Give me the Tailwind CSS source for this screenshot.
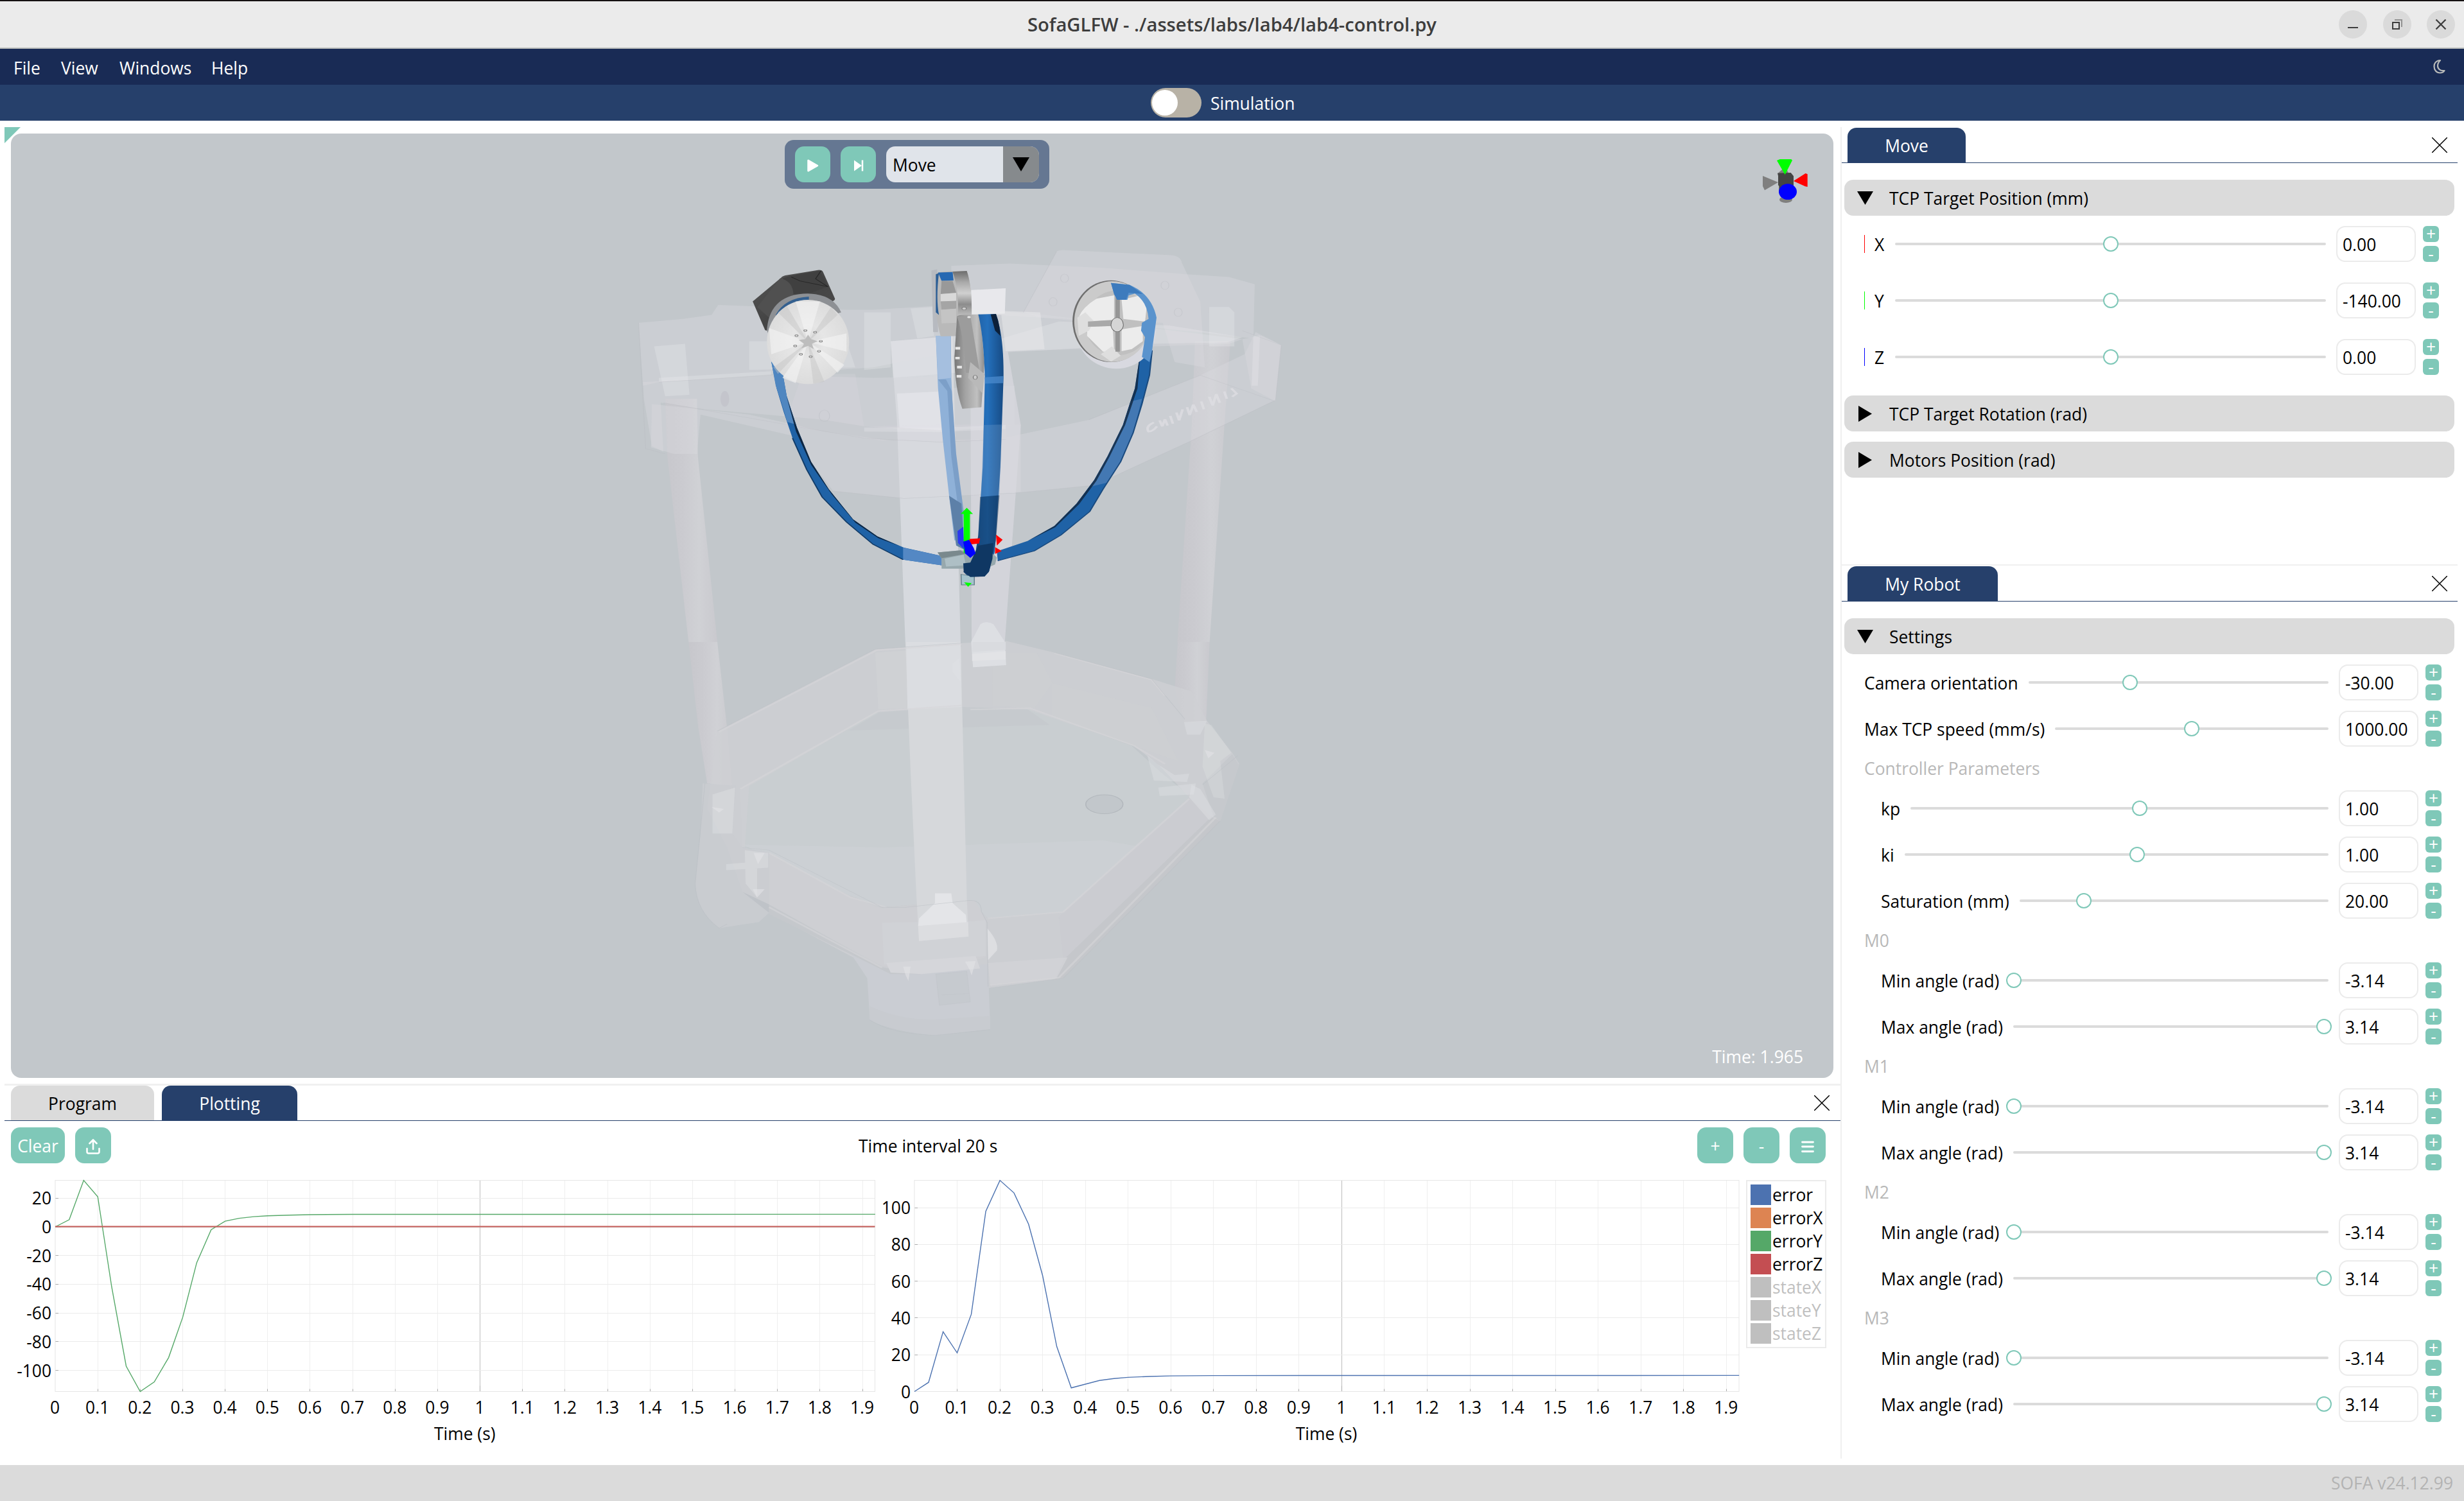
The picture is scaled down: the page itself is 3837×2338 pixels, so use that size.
<!DOCTYPE html>
<html lang="en">
<head>
<meta charset="utf-8">
<title>SofaGLFW</title>
<script src="https://cdn.jsdelivr.net/npm/@tailwindcss/browser@4"></script>
</head>
<body class="w-[3837px] h-[2338px] overflow-hidden bg-white font-['Open_Sans',sans-serif] text-[26.43px] leading-[36px] text-black flex flex-col">

<!-- window title bar -->
<header class="h-[76px] shrink-0 bg-[#ebebeb] border-t-2 border-t-[#151112] border-b-2 border-b-[#bcbfbd] flex items-center relative justify-end pr-[14px] gap-6">
  <div class="absolute inset-0 flex items-center justify-center text-[29.2px] font-semibold text-[#3d3d3d]">SofaGLFW - ./assets/labs/lab4/lab4-control.py</div>
  <svg class="size-11" viewBox="0 0 44 44"><circle cx="22" cy="22" r="22" fill="#dadada"/><path d="M14 27h16" stroke="#3d3d3d" stroke-width="2"/></svg>
  <svg class="size-11 ml-px" viewBox="0 0 44 44"><circle cx="22" cy="22" r="22" fill="#dadada"/><path d="M18 15h11v11" stroke="#929292" stroke-width="2" fill="none"/><path d="M15 19h10v10h-10z" stroke="#3d3d3d" stroke-width="2" fill="none"/></svg>
  <svg class="size-11" viewBox="0 0 44 44"><circle cx="22" cy="22" r="22" fill="#dadada"/><path d="M14.500 14.500l15 15m0-15l-15 15" stroke="#3d3d3d" stroke-width="2.300"/></svg>
</header>

<!-- menu bar -->
<nav class="h-[56px] shrink-0 bg-[#192b55] text-white flex items-center pl-[21px] pr-7">
  <span class="w-[74px] pt-[3px]">File</span><span class="w-[91px] pt-[3px]">View</span><span class="w-[143px] pt-[3px]">Windows</span><span class="pt-[3px]">Help</span>
  <svg class="ml-auto w-[20px] h-[24px]" viewBox="0 0 20 24"><path d="M11 2C4 2.500 1.500 7 1.500 11.500C1.500 17 5 21.500 10.500 21.500C14 21.500 16.500 20 17.500 18C11 19 7 15 7 10.500C7 6 9 4 11 2Z" fill="none" stroke="#b8bab9" stroke-width="2.200" stroke-linejoin="round"/></svg>
</nav>

<!-- simulation toggle -->
<div class="h-[56px] shrink-0 bg-[#26406b] text-white flex items-center pl-[1792px]">
  <div class="w-[79px] h-[46px] rounded-full bg-[#b8b2a6] flex items-center pl-[2px]"><div class="size-10 rounded-full bg-white"></div></div>
  <span class="ml-[14px] pt-[2px]">Simulation</span>
</div>

<div class="flex flex-1 min-h-0">
  <!-- left column -->
  <div class="w-[2866px] flex flex-col relative pt-5">
    <svg class="absolute left-[7px] top-[10px] w-[25px] h-[25px]" viewBox="0 0 25 25"><path d="M0 0h25L0 25z" fill="#7fc8b8"/></svg>
    <main class="relative ml-[17px] w-[2838px] h-[1471px] rounded-[16px] bg-[#c2c7cb] shrink-0 overflow-hidden">
      <!-- robot, upper body -->
      <svg class="absolute left-[943px] top-[152px] w-[1080px] h-[640px]" viewBox="0 0 1568 1568" preserveAspectRatio="none">
        <defs>
          <linearGradient id="pole" x1="0" x2="1" y1="0" y2="0"><stop offset="0" stop-color="#c7c7cc"/><stop offset=".35" stop-color="#cbcbd0"/><stop offset=".65" stop-color="#d0d1d5"/><stop offset="1" stop-color="#c9c9ce"/></linearGradient>
          <linearGradient id="tube" x1="0" x2="1" y1="0" y2="0"><stop offset="0" stop-color="#154070"/><stop offset=".3" stop-color="#1f60a4"/><stop offset=".6" stop-color="#2470bc"/><stop offset="1" stop-color="#174b84"/></linearGradient>
          <linearGradient id="metal" x1="0" x2="1" y1="0" y2="0"><stop offset="0" stop-color="#777"/><stop offset=".35" stop-color="#a2a2a2"/><stop offset=".75" stop-color="#c0c0c0"/><stop offset="1" stop-color="#8b8b8b"/></linearGradient>
          <linearGradient id="rim" x1="0" x2="0" y1="0" y2="1"><stop offset="0" stop-color="#6c6c6c"/><stop offset=".25" stop-color="#a9a9a9"/><stop offset=".5" stop-color="#d0d0d0"/><stop offset=".75" stop-color="#8c8c8c"/><stop offset="1" stop-color="#bdbdbd"/></linearGradient>
          <radialGradient id="disc"><stop offset="0" stop-color="#dadada"/><stop offset=".4" stop-color="#e6e6e6"/><stop offset="1" stop-color="#dcdcdc"/></radialGradient>
          <linearGradient id="dark" x1="0" x2="1" y1="0" y2="1"><stop offset="0" stop-color="#565656"/><stop offset=".5" stop-color="#444"/><stop offset="1" stop-color="#4d4d4d"/></linearGradient>
        </defs>
        <!-- poles -->
        <path d="M110 640L182 640L184 860L228 1568L163 1568L115 860Z" fill="url(#pole)"/>
        <path d="M1308 420L1388 420L1372 800L1341 1568L1268 1568L1300 760Z" fill="url(#pole)"/>
        <path d="M620 420L760 400L778 1568L653 1568L634 720Z" fill="#d6d9de"/>
        <path d="M800 460L885 460L914 740L878 1568L803 1568Z" fill="#d3d4da"/>
        <path d="M802 1568L823 1500Q835 1485 852 1500L878 1568Z" fill="#dfe1e5"/>
        <!-- translucent housing -->
        <g fill="#dad9df" fill-opacity=".4">
          <path d="M50 350L150 335L215 320L230 282L520 300L580 300L725 285L810 300L970 320L1415 412L1385 430L960 455L700 480L580 520L96 576L60 590Z"/>
          <path d="M757 132L890 124L1100 140L1290 165L1385 175L1443 203L1440 410L1320 385L960 330L757 310Z"/>
          <path d="M920 310L995 78Q1000 72 1010 72L1255 92Q1275 95 1278 120L1320 270L1330 520L1262 500L1235 350L960 330Z"/>
          <path d="M60 576L350 550L580 560L725 555L735 600L900 590L900 740L730 765L560 745L470 720L200 680L100 655L106 842L80 820L62 640Z"/>
          <path d="M80 660L300 700L470 765L620 800L860 795L1068 720L1320 550L1420 470L1445 385L1503 435L1490 645L1300 800L1080 970L900 1000L650 1020L490 992L395 780L190 700L182 850L130 850L78 825Z"/>
          <path d="M1415 412L1458 400L1503 435L1490 650L1435 600Z"/>
          <path d="M420 545L540 545L560 745L880 735L882 800L600 800L380 740Z" fill-opacity=".25"/>
          <path d="M866 740L914 738L914 995L866 1000Z"/>
          <path d="M634 620L732 612L735 760L640 750Z" fill="#f0f0f4"/>
        </g>
        <g fill="#ececf0" fill-opacity=".3">
          <path d="M85 440L155 430L165 625L110 630Z"/>
          <path d="M96 560L350 535L350 550L96 576Z"/>
          <path d="M665 295L715 290L718 400L680 410Z"/>
          <path d="M1000 345L1250 360L1415 405L1380 425L1200 430L960 455L870 460L870 410Z"/>
          <path d="M560 750L730 750L880 740L880 755L730 767L560 765Z"/>
          <path d="M1440 400L1455 398L1450 590L1436 590Z"/>
          <path d="M560 310L620 310L620 520L560 530ZM300 420L520 420L540 520L300 530ZM620 420L770 400L770 540L625 560Z"/>
          <path d="M1340 290L1385 290L1397 310L1397 440L1340 440Z"/>
        </g>
        <path d="M802 225L880 218L878 315L802 318Z" fill="#f4f4f6" fill-opacity=".7"/>
        <path d="M802 300L958 310L968 450L880 458L870 320L802 318Z" fill="#e9e9ec" fill-opacity=".5"/>
        <g fill="none" stroke="#bcbdc4" stroke-opacity=".5" stroke-width="1.500">
          <path d="M50 350L66 830L110 850M106 655L390 740L560 790L730 805L880 795M96 576L350 550M490 992L650 1020L900 1000L1080 970L1300 800L1490 645L1503 435L1415 380M1068 720L1320 550L1490 650M995 78L920 310"/>
          <ellipse cx="1013" cy="180" rx="9" ry="16"/><ellipse cx="1240" cy="207" rx="9" ry="16"/><ellipse cx="987" cy="270" rx="9" ry="16"/><ellipse cx="1270" cy="310" rx="9" ry="16"/><ellipse cx="470" cy="705" rx="12" ry="22"/>
        </g>
        <ellipse cx="245" cy="640" rx="10" ry="30" fill="#b9bac2" fill-opacity=".4"/>
        <!-- embossed maker's mark on the housing -->
        <g fill="none" stroke="#e0e0e4" stroke-opacity=".7" stroke-width="6"><path d="M1215 730Q1195 745 1203 765Q1212 765 1222 745M1228 722L1234 745L1240 718L1246 742M1252 705L1258 735M1266 692L1272 722L1280 680M1290 672L1296 702L1304 662L1312 690M1322 650L1328 680M1340 632L1348 665L1356 622L1364 655M1374 612L1380 640M1390 600L1402 620L1392 632"/></g>
        <!-- back tube -->
        <path d="M722 400L756 400L757 560L765 850L782 1070L785 1180L764 1180L752 1010L738 800L727 600Z" fill="#8fb1d8"/>
        <path d="M722 400L755 400L757 560L727 566Z" fill="#a5bfdf"/>
        <path d="M727 566L745 566L758 610L768 850L785 1070L783 1180L776 1100L757 860L748 610Z" fill="#7c9fc8"/>
        <path d="M752 1010L780 1040L786 1215L768 1200Z" fill="#5d80a8"/>
        <!-- left side tube -->
        <path d="M350 498L376 545L385 630L408 750L440 880L480 985L535 1100L590 1165L650 1208L735 1240L735 1275L648 1254L580 1195L520 1110L465 1015L430 910L398 790L378 690L362 600Z" fill="#1f62a6"/>
        <path d="M350 498L376 545L385 630L406 738L386 728L372 650L360 590Z" fill="#4f86c0"/>
        <path d="M648 1208L735 1240L735 1275L648 1254Z" fill="#5488c4"/>
        <path d="M384 628L408 750L440 880L480 985L535 1100L590 1165L640 1202L592 1172L540 1112L487 1005L440 892L406 765Z" fill="#0b1c30" fill-opacity=".85"/>
        <path d="M398 790L430 910L465 1015L520 1110L580 1195L648 1254" fill="none" stroke="#123c68" stroke-width="3"/>
        <!-- right side tube -->
        <path d="M1185 455L1211 455L1205 550L1188 660L1168 770L1140 880L1100 985L1070 1070L1005 1160L945 1220L862 1258L860 1222L930 1182L990 1125L1040 1040L1080 950L1110 860L1145 740L1172 600Z" fill="#1f62a6"/>
        <path d="M1188 640L1168 770L1140 880L1110 960L1072 975L1110 860L1145 740L1162 650Z" fill="#4378b3"/>
        <path d="M1185 455L1172 600L1162 650L1145 740L1110 860L1080 950L1040 1040L990 1125L930 1182L992 1130L1046 1042L1085 953L1115 860L1150 740L1168 650L1178 600Z" fill="#10253d" fill-opacity=".8"/>
        <path d="M1211 455L1205 550L1188 660L1168 770L1140 880L1100 985L1070 1070L1005 1160L945 1220L862 1258" fill="none" stroke="#1a4a7e" stroke-width="3"/>
        <!-- left motor and pulley -->
        <path d="M308 268L372 178Q376 170 386 168L458 148Q465 148 467 156L494 258Q494 265 488 268L484 278L340 380L336 378Z" fill="url(#dark)"/>
        <path d="M376 180L390 172L460 152L478 212L440 235L400 240Z" fill="#404040"/>
        <path d="M370 180Q398 190 400 240L345 330L318 290Z" fill="#505050"/>
        <path d="M395 175L415 190L478 212L450 182L462 152" fill="none" stroke="#262626" stroke-width="2"/>
        <path d="M340 380Q345 240 432 238Q490 240 508 310L345 400Z" fill="#8d9094"/>
        <path d="M360 320Q380 255 435 250L435 262Q385 265 362 325Z" fill="#34608f"/>
        <ellipse cx="433" cy="423" rx="93" ry="161" fill="url(#disc)"/>
        <g fill="#f6f6f6" fill-opacity=".55"><path d="M433 423L405 268L460 268ZM433 423L345 370L350 470ZM433 423L520 390L520 460ZM433 423L375 560L405 580ZM433 423L500 540L515 510Z"/></g>
        <g fill="#c4c4c4" fill-opacity=".45"><path d="M433 423L365 310L385 285ZM433 423L485 290L500 320ZM433 423L355 520L365 545ZM433 423L445 582L470 575Z"/></g>
        <g fill="#d8d8d8" stroke="#777" stroke-width="1.500"><circle cx="427" cy="379" r="3.500"/><circle cx="449" cy="386" r="3.500"/><circle cx="462" cy="420" r="3.500"/><circle cx="458" cy="458" r="3.500"/><circle cx="439" cy="479" r="3.500"/><circle cx="417" cy="470" r="3.500"/><circle cx="404" cy="438" r="3.500"/><circle cx="407" cy="399" r="3.500"/></g>
        <path d="M433 395L440 412L455 420L442 430L446 450L433 438L418 448L424 430L412 415L427 412Z" fill="#bdbdbd"/>
        <!-- rear pulley -->
        <path d="M712 150L725 146L727 385L716 385Z" fill="#b7bac0"/>
        <path d="M722 160Q740 150 792 152Q803 200 803 318L770 330L768 400L733 402Q716 300 722 160Z" fill="#b9b9b9"/>
        <path d="M760 155L792 152Q804 210 803 318L772 322Q775 230 760 155Z" fill="url(#rim)"/>
        <path d="M727 158L760 156L762 188L735 190Z" fill="#2568b2"/>
        <path d="M722 165L729 160Q722 260 729 320L722 310Z" fill="#2d5f96"/>
        <path d="M735 190L760 190L768 235L733 240Z" fill="#999"/><path d="M733 240L768 236L768 268L733 268Z" fill="#d9d9d9"/><path d="M733 268L768 266L768 296L735 300Z" fill="#a5a5a5"/><path d="M733 300L768 296L768 350L735 352Z" fill="#c4c4c4"/>
        <circle cx="786" cy="295" r="5" fill="#ccc" stroke="#777" stroke-width="1.500"/>
        <!-- center pulley -->
        <path d="M770 325Q775 318 822 318L832 500L825 672L782 678Q765 600 764 480Z" fill="url(#metal)"/>
        <path d="M770 325L800 322L822 545L790 540Q785 400 770 325Z" fill="#9c9c9c"/>
        <path d="M800 500L832 545L828 620L795 560Z" fill="#b9b9b9"/>
        <g fill="#e8e8e8"><rect x="766" y="442" width="11" height="10"/><rect x="766" y="480" width="10" height="9"/><rect x="770" y="514" width="11" height="10"/><rect x="769" y="549" width="11" height="10"/><circle cx="797" cy="328" r="4"/></g>
        <ellipse cx="811" cy="558" rx="4.500" ry="8" fill="#ccc" stroke="#666" stroke-width="1.500"/>
        <!-- right pulley -->
        <ellipse cx="1130" cy="380" rx="90" ry="145" fill="#d8d9e0"/>
        <ellipse cx="1118" cy="344" rx="87" ry="156" fill="#6f6f6f"/>
        <ellipse cx="1121" cy="345" rx="86" ry="154" fill="#cbcbcb"/>
        <ellipse cx="1133" cy="350" rx="74" ry="124" fill="#c0c0c0"/>
        <path d="M1085 258L1125 245L1125 338L1064 345L1046 325Q1055 290 1085 258ZM1142 262L1185 245L1200 270L1195 345L1146 335ZM1064 365L1122 362L1125 462L1100 460L1064 400ZM1142 375L1190 362L1190 420L1165 450L1142 458Z" fill="#ececec"/>
        <path d="M1042 330L1060 310L1080 345L1068 380L1045 400ZM1095 470L1120 440L1140 475L1118 498Z" fill="#dedede"/>
        <path d="M1128 250L1138 255L1138 460L1128 460Z" fill="#969696"/>
        <path d="M1066 345L1122 340L1122 362L1066 365Z" fill="#a9a9a9"/>
        <ellipse cx="1132" cy="357" rx="14" ry="27" fill="#d5d5d5" stroke="#666" stroke-width="1.500"/>
        <path d="M1118 198L1160 205Q1210 240 1221 330L1211 455L1205 500L1188 480L1195 405L1186 380L1188 350L1203 335Q1200 270 1172 238L1158 245L1155 262L1132 262L1125 240Z" fill="#5a93cd"/>
        <path d="M1118 198L1160 205L1190 240L1158 235L1152 262L1132 262L1125 240Z" fill="#3d7bbd"/>
        <!-- front tube -->
        <path d="M818 318L858 316Q876 400 875 560L868 900L858 1160L855 1225L842 1300L832 1318L795 1318L784 1300L806 1290L818 1160L828 900L833 560Q830 400 818 318Z" fill="url(#tube)"/>
        <path d="M830 740L872 738L866 1008L824 1014Z" fill="#6b97c8" fill-opacity=".35"/>
        <path d="M832 558L875 553L874 580L833 582Z" fill="#4d8dd0" fill-opacity=".7"/>
        <path d="M822 1014L866 1008L858 1180L842 1300L832 1318L795 1318L806 1290L818 1160Z" fill="#0d2f54" fill-opacity=".5"/>
        <path d="M846 318L858 316Q866 350 868 400L856 380Z" fill="#0c2039"/>
        <!-- effector and gizmo -->
        <path d="M726 1226L778 1218L850 1230L860 1245L856 1272L845 1280L780 1288L735 1288L735 1250Z" fill="#97a8ad"/>
        <path d="M742 1250L785 1235L790 1275L745 1280Z" fill="#aebfc5"/>
        <path d="M726 1226L778 1218L790 1232L735 1248Z" fill="#7a898d"/>
        <path d="M779 1310L809 1318L809 1350L780 1350Z" fill="#a5c3cd" stroke="#5d7a84" stroke-width="2"/>
        <path d="M784 1268L800 1265L818 1200L852 1190L850 1250L842 1300L832 1318L800 1320L785 1300Z" fill="#0f3763"/>
        <path d="M771 1145L784 1128L786 1215L772 1190Z" fill="#2a38f0"/>
        <path d="M785 1075L799 1075L799 1228L785 1228ZM778 1079L792 1056L806 1079ZM786 1340L803 1343L795 1357Z" fill="#0f0"/>
        <path d="M798 1175L822 1172L820 1192L798 1196ZM858 1158L873 1178L860 1200ZM856 1206L871 1221L856 1232Z" fill="#f00"/>
        <path d="M784 1185L797 1178L808 1210L812 1230L800 1247L788 1230Z" fill="#00f"/>
      </svg>
      <!-- robot, base -->
      <svg class="absolute left-[943px] top-[752px] w-[1080px] h-[680px]" viewBox="0 0 1568 1568" preserveAspectRatio="none">
        <path d="M163 92L228 92L250 400L262 610L205 600L185 400Z" fill="url(#pole)"/>
        <path d="M1269 92L1341 92L1333 380L1284 380L1262 260Z" fill="url(#pole)"/>
        <path d="M585 345L780 325L940 335L1165 465L1230 560L1300 650L1010 1062L840 1085L800 1020L600 1045L530 1005L285 830L280 620Z" fill="#c9ced1"/>
        <path d="M285 820L600 830L1100 805L1195 830L1010 1062L840 1085L800 1020L600 1045L530 1005Z" fill="#cdd1d4" fill-opacity=".8"/>
        <path d="M525 410L980 390L930 335L780 325L595 345Z" fill="#c6cace"/>
        <path d="M228 412L585 118L780 96L880 88L990 130L1210 225L1300 270L1335 375L1392 490L1408 530L1365 735L1010 1300L845 1335L600 1280L345 1065L285 990L250 830L205 690ZM300 610L290 830L530 1005L600 1045L800 1020L840 1085L1010 1062L1295 650L1230 540L1170 465L930 335L780 325L590 345Z" fill="#cecfd3" fill-rule="evenodd" fill-opacity=".8"/>
        <path d="M585 130L780 110L780 320L592 335Z" fill="#d0d3d6" fill-opacity=".6"/>
        <path d="M985 240L1210 330L1270 520L1170 465L985 360ZM850 130L950 130L985 240L945 330L850 320Z" fill="#cdcfd2" fill-opacity=".8"/>
        <path d="M195 600L270 608L262 780L285 830L345 850L345 1065L322 1098L232 1120Q180 1060 178 960L190 780Z" fill="#cacdd1" fill-opacity=".85"/>
        <path d="M1325 600L1392 495L1408 535L1365 735L1350 720Z" fill="#c6c9cd"/>
        <path d="M1295 650L1345 720L1010 1235L1000 1080Z" fill="#cbccd1"/>
        <path d="M1345 720L1365 735L1010 1300L990 1308L1010 1235Z" fill="#c5c7cb"/>
        <path d="M525 1200L610 1270L840 1250L845 1482L720 1505Q620 1490 573 1450L567 1300Z" fill="#cacdd3"/>
        <path d="M573 1400Q640 1450 720 1448L845 1435L845 1482L720 1505Q620 1490 573 1450Z" fill="#c8cbd0"/>
        <path d="M345 850L530 1010L600 1050L810 1020L835 1090L835 1225L690 1280L600 1255L345 1035Z" fill="#cecfd3"/>
        <path d="M600 1100L810 1095L835 1090L835 1220L605 1250Z" fill="#d2d3d8" fill-opacity=".6"/>
        <path d="M345 1035L600 1260L690 1285L620 1285L525 1210L345 1070Z" fill="#c5c8cc"/>
        <path d="M345 1035L285 990L345 1065Z" fill="#bfc3c8"/>
        <!-- front column -->
        <path d="M653 92L778 92L792 1010L796 1150L684 1166L678 1000L665 560Z" fill="#d6d8db"/>
        <path d="M655 92L778 92L780 325L658 335Z" fill="#dbdde1"/>
        <path d="M720 995L757 995L760 1030L790 1072L792 1105L682 1112L684 1085L720 1030Z" fill="#e4e5e8"/>
        <path d="M682 1112L795 1098L796 1150L684 1166Z" fill="#dcdde0"/>
        <path d="M610 1245L812 1220L822 1265L690 1285L620 1280Z" fill="#d5d6da"/>
        <path d="M722 1285L792 1275L800 1385L730 1397Z" fill="#c6cacf" stroke="#c0c4c9"/>
        <path d="M735 1360L796 1355" stroke="#c0c4c9"/>
        <path d="M802 92L823 30Q838 14 852 30L878 92L881 175L806 183Z" fill="#dddfe3"/>
        <path d="M805 92L880 92L880 120L804 128Z" fill="#d9dbdf"/><path d="M804 135L880 125L880 155L804 160Z" fill="#e2e3e6"/>
        <path d="M840 1245L1020 1225L995 1300L845 1325Z" fill="#d2d3d7" fill-opacity=".8"/>
        <path d="M838 1120Q865 1170 860 1200L840 1235Z" fill="#dddee1"/>
        <g fill="#e2e3e6" fill-opacity=".6">
          <path d="M217 640L268 615L262 780L217 780ZM290 840L343 850L343 900L318 895L318 1010L292 960ZM248 890L343 878L343 903L248 912ZM760 170L775 150L778 235L760 200ZM1283 380L1335 375L1320 425L1290 425ZM1200 500L1222 530L1262 570L1295 565L1290 595L1215 590ZM1225 615L1310 600L1305 640L1228 645Z" fill-opacity=".4"/>
          <path d="M648 1258L665 1258L660 1310L654 1290ZM788 1240L812 1238L803 1290L798 1268ZM310 850L335 850L320 890ZM308 980L335 980L318 1010ZM1330 480L1352 490L1338 510ZM215 685L243 692L232 705Z"/>
          <path d="M1330 385L1345 390L1390 490L1365 520L1375 655L1350 650L1325 540Z" fill-opacity=".3"/>
          <path d="M1300 605L1320 620L1355 712L1340 732L1295 650Z" fill-opacity=".4"/>
        </g>
        <g fill="none" stroke="#d6d6d9" stroke-width="5" stroke-opacity=".6">
          <path d="M232 415L588 122L780 100M990 132L1210 228L1240 285M280 620L592 340L780 320M800 335L935 330L1170 465L1240 530M345 850L530 1010L610 1045M840 1085L1010 1062L1295 655M600 1262L345 1045M1355 722L1000 1298L845 1325"/>
        </g>
        <g fill="none" stroke="#bbbfc4" stroke-width="1.500" stroke-opacity=".6">
          <path d="M228 412L585 118L780 96M990 130L1210 225L1285 370M600 1045L650 1046L800 1020Q825 1020 825 1060L838 1100L840 1330M1325 605L1405 500M250 1105L232 1120Q180 1060 178 960L200 600M1365 735L1010 1300L845 1335M573 1450Q620 1500 720 1505L845 1485M285 830L345 840L600 1045"/>
        </g>
        <ellipse cx="1103" cy="675" rx="42" ry="34" fill="#c2c7cb" stroke="#b3b8bd" stroke-width="2.500"/>
      </svg>

      <!-- playback toolbox -->
      <div class="absolute left-[1205px] top-[10px] w-[412px] h-[76px] rounded-[14px] bg-[#657792] flex items-center px-4 gap-4">
        <button class="size-14 rounded-[14px] bg-[#7fc8b8] flex items-center justify-center"><svg class="w-[18px] h-[20px] mt-[4px]" viewBox="0 0 18 20"><path d="M2 1.500L16 9.500Q17 10 16 10.700L2 18.500Q1 19 1 18V2Q1 1 2 1.500Z" fill="#fff" stroke="#fff" stroke-width="1.500"/></svg></button>
        <button class="size-14 rounded-[14px] bg-[#7fc8b8] flex items-center justify-center"><svg class="w-[16px] h-[18px] mt-[4px]" viewBox="0 0 16 18"><path d="M1 .5L13 9L1 17.500Z" fill="#fff"/><path d="M14 .5v17" stroke="#fff" stroke-width="2.500"/></svg></button>
        <div class="w-[238px] h-14 rounded-[14px] overflow-hidden bg-[#e0e4ea] flex shrink-0">
          <span class="flex-1 pl-[10px] pt-[11px]">Move</span>
          <span class="w-14 bg-[#868a8d] flex items-center justify-center"><svg class="w-[26px] h-[22px]" viewBox="0 0 26 22"><path d="M0 0h26L13 22z"/></svg></span>
        </div>
      </div>

      <!-- view orientation gizmo -->
      <svg class="absolute left-[2713px] top-[27px] w-[100px] h-[90px]" viewBox="0 0 300 270">
        <path d="M115 105L135 88H158L166 105Z" fill="#7f7f7f"/><ellipse cx="153" cy="228" rx="30" ry="15" fill="#7f7f7f"/>
        <path d="M114 104L176 102L189 118V165L160 195H121V165L117 160V117Z" fill="#444"/>
        <path d="M45 117L117 147L54 184L45 165Z" fill="#7f7f7f"/><path d="M189 141L245 105L254 109V168L243 166Z" fill="#f00"/>
        <path d="M111 45L125 39H178L183 44L149 111Z" fill="#0f0"/><ellipse cx="162" cy="191" rx="42" ry="37" fill="#00f"/>
      </svg>
      <span class="absolute right-[47px] bottom-[15px] text-white">Time: 1.965</span>
    </main>

    <!-- bottom panel -->
    <section class="ml-[7px] mt-[9px] border-t-[3px] border-[#f0f0f0] flex-1 flex flex-col min-h-0">
      <div class="h-[55px] border-b border-[#26406b] flex items-end pl-[10px] pr-[17px] shrink-0">
        <div class="w-[223px] h-[54px] rounded-t-[14px] bg-[#dbdbdb] flex items-center justify-center pt-[2px]">Program</div>
        <div class="ml-3 w-[211px] h-[54px] rounded-t-[14px] bg-[#26406b] text-white flex items-center justify-center pt-[2px]">Plotting</div>
        <svg class="ml-auto mb-[15px] size-6" viewBox="0 0 24 24"><path d="M0 0L24 24M24 0L0 24" stroke="#000" stroke-width="1.500"/></svg>
      </div>
      <div class="mt-[10px] h-14 flex items-center pl-[10px] pr-[23px] gap-4 shrink-0 relative text-white">
        <button class="h-14 w-[84px] rounded-[14px] bg-[#7fc8b8] pt-[2px]">Clear</button>
        <button class="size-14 rounded-[14px] bg-[#7fc8b8] flex items-center justify-center"><svg class="w-[22px] h-[26px] mt-[4px]" viewBox="0 0 22 26"><path d="M11 17V3M5.500 8L11 2.500L16.500 8M1.500 16V21Q1.500 23.500 4 23.500H18Q20.500 23.500 20.500 21V16" fill="none" stroke="#fff" stroke-width="2.600" stroke-linecap="round" stroke-linejoin="round"/></svg></button>
        <span class="absolute left-[1330px] pt-px text-black">Time interval 20 s</span>
        <button class="ml-auto size-14 rounded-[14px] bg-[#7fc8b8] pt-[2px]">+</button>
        <button class="size-14 rounded-[14px] bg-[#7fc8b8] pt-[2px]">-</button>
        <button class="size-14 rounded-[14px] bg-[#7fc8b8] flex items-center justify-center"><svg class="w-[20px] h-[18px] mt-[4px]" viewBox="0 0 20 18"><path d="M1.500 2h17M1.500 9h17M1.500 16.500h17" stroke="#fff" stroke-width="2.800" stroke-linecap="round"/></svg></button>
      </div>
      <div class="flex items-start">
        <svg id="plot1" class="w-[1373px] h-[459px] shrink-0 -ml-[7px] mr-[7px]" viewBox="0 1813 1373 459"></svg>
        <svg id="plot2" class="w-[1339px] h-[459px] shrink-0 -ml-[7px]" viewBox="1373 1813 1339 459"></svg>
        <div id="legend" class="mt-[26px] ml-[7px] w-[125px] h-[262px] border-2 border-[#ebebeb] pt-[3px] pl-[5px] shrink-0"></div>
      </div>
    </section>
  </div>

  <!-- right column -->
  <div class="flex-1 flex flex-col mt-[10px] mb-[10px] border-l-[2px] border-[#f0f0f0] pr-[10px]">
    <section class="h-[681px] shrink-0">
      <div class="h-[56px] border-b border-[#26406b] flex items-end pl-[9px] pr-[16px]">
        <div class="w-[184px] h-[54px] rounded-t-[14px] bg-[#26406b] text-white flex items-center justify-center pt-[2px]">Move</div>
        <svg class="ml-auto mb-[15px] size-6" viewBox="0 0 24 24"><path d="M0 0L24 24M24 0L0 24" stroke="#000" stroke-width="1.500"/></svg>
      </div>
      <div class="pl-[4px] pr-[5px] pt-[26px] flex flex-col gap-4">
        <div class="h-14 rounded-[14px] bg-[#dbdbdb] flex items-center pl-[20px]"><svg class="w-[25px] h-[21px]" viewBox="0 0 25 21"><path d="M0 0h25L12.500 21z"/></svg><span class="ml-[25px] pt-[2px]">TCP Target Position (mm)</span></div>
        <div id="axes" class="flex flex-col gap-8 mb-4"></div>
        <div class="h-14 rounded-[14px] bg-[#dbdbdb] flex items-center pl-[22px]"><svg class="w-[21px] h-[25px]" viewBox="0 0 21 25"><path d="M0 0v25L21 12.500z"/></svg><span class="ml-[27px] pt-[2px]">TCP Target Rotation (rad)</span></div>
        <div class="h-14 rounded-[14px] bg-[#dbdbdb] flex items-center pl-[22px]"><svg class="w-[21px] h-[25px]" viewBox="0 0 21 25"><path d="M0 0v25L21 12.500z"/></svg><span class="ml-[27px] pt-[2px]">Motors Position (rad)</span></div>
      </div>
    </section>
    <section class="border-t-[2px] border-[#f0f0f0]">
      <div class="h-[56px] border-b border-[#26406b] flex items-end pl-[9px] pr-[16px]">
        <div class="w-[234px] h-[54px] rounded-t-[14px] bg-[#26406b] text-white flex items-center justify-center pt-[2px]">My Robot</div>
        <svg class="ml-auto mb-[15px] size-6" viewBox="0 0 24 24"><path d="M0 0L24 24M24 0L0 24" stroke="#000" stroke-width="1.500"/></svg>
      </div>
      <div class="pl-[4px] pr-[5px] pt-[26px] flex flex-col gap-4">
        <div class="h-14 rounded-[14px] bg-[#dbdbdb] flex items-center pl-[20px]"><svg class="w-[25px] h-[21px]" viewBox="0 0 25 21"><path d="M0 0h25L12.500 21z"/></svg><span class="ml-[25px] pt-[2px]">Settings</span></div>
        <div id="settings" class="flex flex-col gap-4"></div>
      </div>
    </section>
  </div>
</div>

<footer class="h-14 shrink-0 bg-[#dbdbdb] text-[#b3b3b3] flex items-center justify-end pr-[17px]">SOFA v24.12.99</footer>

<script>
const control = (value, frac) => `
  <div class="relative flex-1 h-14 flex items-center"><div class="w-full h-1 rounded-full bg-[#dbdbdb]"></div>
    <div class="absolute inset-y-0 left-[7px] right-[7px] flex items-center"><div class="absolute size-6 rounded-full border-2 border-[#7fc8b8] bg-white -translate-x-1/2" style="left:${frac * 100}%"></div></div></div>
  <div class="ml-[16px] w-[124px] h-14 rounded-[14px] border-2 border-[#ebebeb] pl-[8px] pt-px flex items-center">${value}</div>
  <div class="ml-[11px] w-[25px] flex flex-col gap-[6px] text-white leading-[25px] text-center"><span class="h-[25px] rounded-[6px] bg-[#7fc8b8]">+</span><span class="h-[25px] rounded-[6px] bg-[#7fc8b8]">-</span></div>`;

document.getElementById('axes').innerHTML = [['X', '0.00', 'bg-[#ff0000]'], ['Y', '-140.00', 'bg-[#00ff00]'], ['Z', '0.00', 'bg-[#0000ff]']]
  .map(([n, v, c]) => `<div class="h-14 flex items-center pl-[31px] pr-[24px]"><i class="w-px h-7 ${c}"></i><span class="ml-[15px] w-[32px] pt-[2px]">${n}</span>${control(v, .5)}</div>`).join('');

const rows = [['Camera orientation', '-30.00', 1 / 3, 0], ['Max TCP speed (mm/s)', '1000.00', .5, 0], 'Controller Parameters',
  ['kp', '1.00', .55, 1], ['ki', '1.00', .55, 1], ['Saturation (mm)', '20.00', .2, 1]];
for (const m of ['M0', 'M1', 'M2', 'M3']) rows.push(m, ['Min angle (rad)', '-3.14', 0, 1], ['Max angle (rad)', '3.14', 1, 1]);
document.getElementById('settings').innerHTML = rows.map(r => typeof r === 'string'
  ? `<div class="h-9 pl-[31px] text-[#b8b8b8]">${r}</div>`
  : `<div class="h-14 flex items-center pr-[20px] ${r[3] ? 'pl-[57px]' : 'pl-[31px]'}"><span class="mr-[16px] pt-px whitespace-nowrap">${r[0]}</span>${control(r[1], r[2])}</div>`).join('');

document.getElementById('legend').innerHTML = [['error', 'bg-[#4c72b0]'], ['errorX', 'bg-[#dd8452]'], ['errorY', 'bg-[#55a868]'], ['errorZ', 'bg-[#c44e52]'], ['stateX', 0], ['stateY', 0], ['stateZ', 0]]
  .map(([n, c]) => `<div class="h-9 flex items-center gap-[2px] ${c ? '' : 'text-[#bfbfbf]'}"><i class="size-8 shrink-0 ${c || 'bg-[#bfbfbf]'}"></i><span>${n}</span></div>`).join('');

function plot(id, o) {
  const X = t => o.x0 + t * o.sx, Y = v => o.y0 - v * o.sy, top = 1839.5, bot = 2168.5;
  let s = '';
  for (let i = 0; i < 20; i++) {
    const x = Math.floor(X(i / 10)) + .5;
    if (i) s += `<path d="M${x} ${top}V${bot}" stroke="${i === 10 ? '#bdbdbd' : '#efefef'}"/><path d="M${x} ${bot}v${i === 10 ? -9 : -4}" stroke="#aaa"/>`;
    s += `<text x="${X(i / 10) - .5}" y="2203" text-anchor="middle">${i / 10}</text>`;
  }
  for (const v of o.ticks) {
    const y = Math.floor(Y(v)) + .5;
    s += `<path d="M${o.x0} ${y}H${o.x1}" stroke="${v ? '#ebebeb' : '#bdbdbd'}"/><path d="M${o.x0} ${y}h${v ? 5 : 9}" stroke="#aaa"/><text x="${o.x0 - 6}" y="${Y(v) + 10}" text-anchor="end">${v}</text>`;
  }
  s += `<rect x="${o.x0}" y="${top}" width="${o.x1 - o.x0}" height="${bot - top}" fill="none" stroke="#e6e6e6"/>`;
  const d = o.data.map(([t, v]) => `${X(t).toFixed(1)},${Y(v).toFixed(1)}`).join(' ');
  s += `<polyline points="${d}" fill="none" stroke="${o.color}" stroke-width="1.400"/>`;
  if (o.zero) s += `<path d="M${o.x0} ${o.y0 - .5}H${o.x1}" stroke="#c9605c" stroke-width="2"/>`;
  s += `<text x="${(o.x0 + o.x1) / 2 - .5}" y="2244" text-anchor="middle">Time (s)</text>`;
  document.getElementById(id).innerHTML = s;
}
const tail = [[.4, 4], [.433, 6], [.467, 7.1], [.5, 7.7], [.55, 8.200], [.6, 8.500], [.7, 8.700], [1.93, 8.750]];
plot('plot1', {x0: 86, x1: 1362.5, sx: 661.6, y0: 1912, sy: 2.237, color: '#55a868', zero: true, ticks: [20, 0, -20, -40, -60, -80, -100],
  data: [[0, 0], [.033, 5], [.067, 32.400], [.1, 21], [.133, -42], [.167, -97], [.2, -114.700], [.233, -108], [.267, -91], [.3, -63], [.333, -25], [.367, -2], ...tail]});
plot('plot2', {x0: 1424, x1: 2708, sx: 665.4, y0: 2168.5, sy: 2.865, color: '#4c72b0', ticks: [100, 80, 60, 40, 20, 0],
  data: [[0, 0], [.033, 5], [.067, 32.500], [.1, 21], [.133, 42], [.167, 98], [.2, 114.800], [.233, 108], [.267, 91], [.3, 63], [.333, 24.500], [.367, 2], ...tail]});
</script>
</body>
</html>
